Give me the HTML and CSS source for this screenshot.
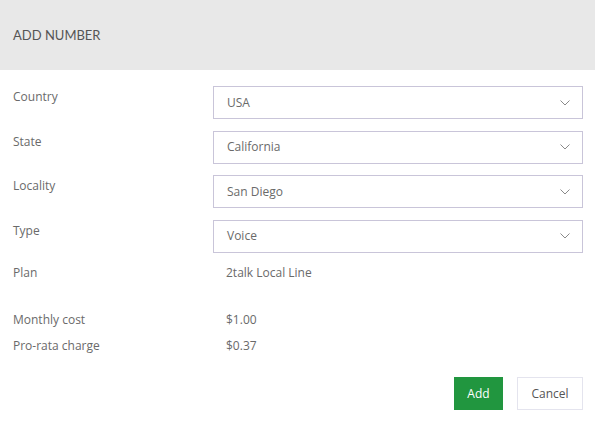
FILE: index.html
```html
<!DOCTYPE html>
<html>
<head>
<meta charset="utf-8">
<link rel="stylesheet" href="styles.css">
</head>
<body>
<div class="dialog">
  <div class="header">ADD NUMBER</div>
  <div class="form">
    <div class="row">
      <div class="label">Country</div>
      <div class="select"><span>USA</span><svg class="chev" width="10" height="6" viewBox="0 0 10 6"><path d="M0.5 0.5 L5 5 L9.5 0.5" fill="none" stroke="#8a8a8a" stroke-width="1"/></svg></div>
    </div>
    <div class="row">
      <div class="label">State</div>
      <div class="select"><span>California</span><svg class="chev" width="10" height="6" viewBox="0 0 10 6"><path d="M0.5 0.5 L5 5 L9.5 0.5" fill="none" stroke="#8a8a8a" stroke-width="1"/></svg></div>
    </div>
    <div class="row">
      <div class="label">Locality</div>
      <div class="select"><span>San Diego</span><svg class="chev" width="10" height="6" viewBox="0 0 10 6"><path d="M0.5 0.5 L5 5 L9.5 0.5" fill="none" stroke="#8a8a8a" stroke-width="1"/></svg></div>
    </div>
    <div class="row">
      <div class="label">Type</div>
      <div class="select"><span>Voice</span><svg class="chev" width="10" height="6" viewBox="0 0 10 6"><path d="M0.5 0.5 L5 5 L9.5 0.5" fill="none" stroke="#8a8a8a" stroke-width="1"/></svg></div>
    </div>
    <div class="info plan">
      <div class="label">Plan</div>
      <div class="value">2talk Local Line</div>
    </div>
    <div class="info cost">
      <div class="label">Monthly cost</div>
      <div class="value">$1.00</div>
    </div>
    <div class="info charge">
      <div class="label">Pro-rata charge</div>
      <div class="value">$0.37</div>
    </div>
    <div class="actions">
      <button class="btn primary">Add</button>
      <button class="btn secondary">Cancel</button>
    </div>
  </div>
</div>
</body>
</html>
```
FILE: styles.css
```css
html, body {
  margin: 0;
  padding: 0;
  background: #ffffff;
}
body {
  font-family: "Open Sans", "Noto Sans", sans-serif;
  font-size: 12px;
  color: #6a6a6a;
}
.dialog {
  width: 595px;
}
.header {
  height: 70px;
  background: #e8e8e8;
  display: flex;
  align-items: center;
  padding-left: 13px;
  font-family: Lato, "Open Sans", sans-serif;
  font-size: 13px;
  color: #555555;
}
.form {
  padding: 16px 12px 0 13px;
}
.row {
  display: grid;
  grid-template-columns: 200px 1fr;
  align-items: start;
  margin-bottom: 11.67px;
}
.row .label {
  padding-top: 3px;
  line-height: 16px;
}
.select {
  height: 33px;
  box-sizing: border-box;
  border: 1px solid #c9c5d9;
  display: flex;
  align-items: center;
  justify-content: space-between;
  padding: 0 12px 0 13px;
  line-height: 16px;
}
.chev {
  display: block;
}
.info {
  display: grid;
  grid-template-columns: 213px 1fr;
  line-height: 16px;
}
.plan {
  margin-top: 4px;
}
.cost {
  margin-top: 31px;
}
.charge {
  margin-top: 10px;
}
.actions {
  display: flex;
  justify-content: flex-end;
  gap: 14px;
  margin-top: 23px;
}
.btn {
  height: 33px;
  font-family: "Open Sans", "Noto Sans", sans-serif;
  font-size: 12px;
  padding: 0;
  box-sizing: border-box;
}
.primary {
  width: 49px;
  background: #21963f;
  color: #ffffff;
  border: none;
}
.secondary {
  width: 66px;
  background: #ffffff;
  color: #555555;
  border: 1px solid #e4e4ee;
}
```
